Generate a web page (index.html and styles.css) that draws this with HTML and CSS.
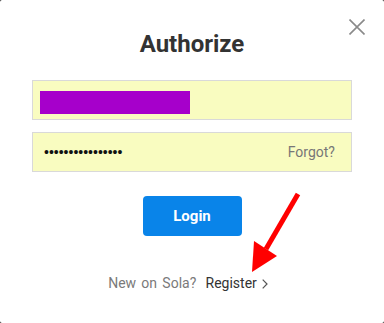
FILE: index.html
```html
<!DOCTYPE html>
<html lang="en">
<head>
<meta charset="utf-8">
<title>Authorize</title>
<link rel="stylesheet" href="styles.css">
</head>
<body>
<div class="dialog">
  <button class="close" aria-label="Close">
    <svg width="16" height="16" viewBox="0 0 16 16"><path d="M0.5 0.5 L15.5 15.5 M15.5 0.5 L0.5 15.5" stroke="#8a8a8a" stroke-width="1.6" fill="none"/></svg>
  </button>
  <h1 class="title">Authorize</h1>
  <form class="form">
    <div class="field field-login"><span class="redact"></span></div>
    <div class="field field-pass"><span class="dots">••••••••••••••••</span><span class="forgot">Forgot?</span></div>
    <button type="button" class="login">Login</button>
  </form>
  <p class="register">New on Sola? <span class="reg-link">Register</span><svg class="chev" width="6" height="10" viewBox="0 0 6 10"><path d="M0.7 0.7 L5 5 L0.7 9.3" stroke="#555" stroke-width="1.2" fill="none"/></svg></p>
  <svg class="arrow" width="384" height="323" viewBox="0 0 384 323">
    <line x1="298" y1="194" x2="266" y2="249" stroke="#ff0000" stroke-width="5"/>
    <polygon points="252,272 254,241 277,256" fill="#ff0000"/>
  </svg>
</div>
</body>
</html>
```
FILE: styles.css
```css
html, body {
  margin: 0;
  padding: 0;
  background: #1a1a1a;
}
body {
  width: 384px;
  height: 323px;
  overflow: hidden;
  font-family: Roboto, "Noto Sans", sans-serif;
}
.dialog {
  position: relative;
  width: 384px;
  height: 323px;
  box-sizing: border-box;
  background: #ffffff;
  border-radius: 2px;
  padding-top: 30px;
}
.close {
  position: absolute;
  top: 19px;
  right: 19px;
  width: 16px;
  height: 16px;
  padding: 0;
  border: 0;
  background: none;
  display: block;
}
.close svg { display: block; }
.title {
  margin: 0 0 22px;
  font-size: 24px;
  line-height: 28px;
  font-weight: 700;
  color: #333333;
  text-align: center;
}
.form {
  margin: 0;
  padding: 0 32px;
  display: flex;
  flex-direction: column;
  gap: 12px;
}
.field {
  height: 40px;
  box-sizing: border-box;
  border: 1px solid #d9d9d9;
  background: #f9fcc0;
  display: flex;
}
.field-login {
  align-items: flex-start;
  padding: 10px 0 0 7px;
}
.redact {
  display: block;
  width: 150px;
  height: 23px;
  background: #a600cb;
}
.field-pass {
  align-items: center;
  justify-content: space-between;
  padding: 0 16px 0 11px;
}
.dots {
  font-family: "Liberation Sans", Arial, sans-serif;
  font-size: 14px;
  color: #111;
  letter-spacing: 0;
}
.forgot {
  font-size: 14px;
  color: #777777;
}
.login {
  align-self: center;
  margin-top: 12px;
  width: 99px;
  height: 40px;
  border: 0;
  border-radius: 4px;
  background: #0984e9;
  color: #ffffff;
  font-family: Roboto, "Noto Sans", sans-serif;
  font-size: 15px;
  font-weight: 700;
  padding: 0;
}
.register {
  margin: 37px 0 0;
  padding-right: 8px;
  font-size: 14px;
  line-height: 20px;
  word-spacing: 1.8px;
  color: #7a7a7a;
  text-align: center;
}
.reg-link {
  margin-left: 4px;
  color: #333333;
}
.chev {
  margin-left: 5px;
  vertical-align: -1px;
}
.arrow {
  position: absolute;
  left: 0;
  top: 0;
  pointer-events: none;
}
```
